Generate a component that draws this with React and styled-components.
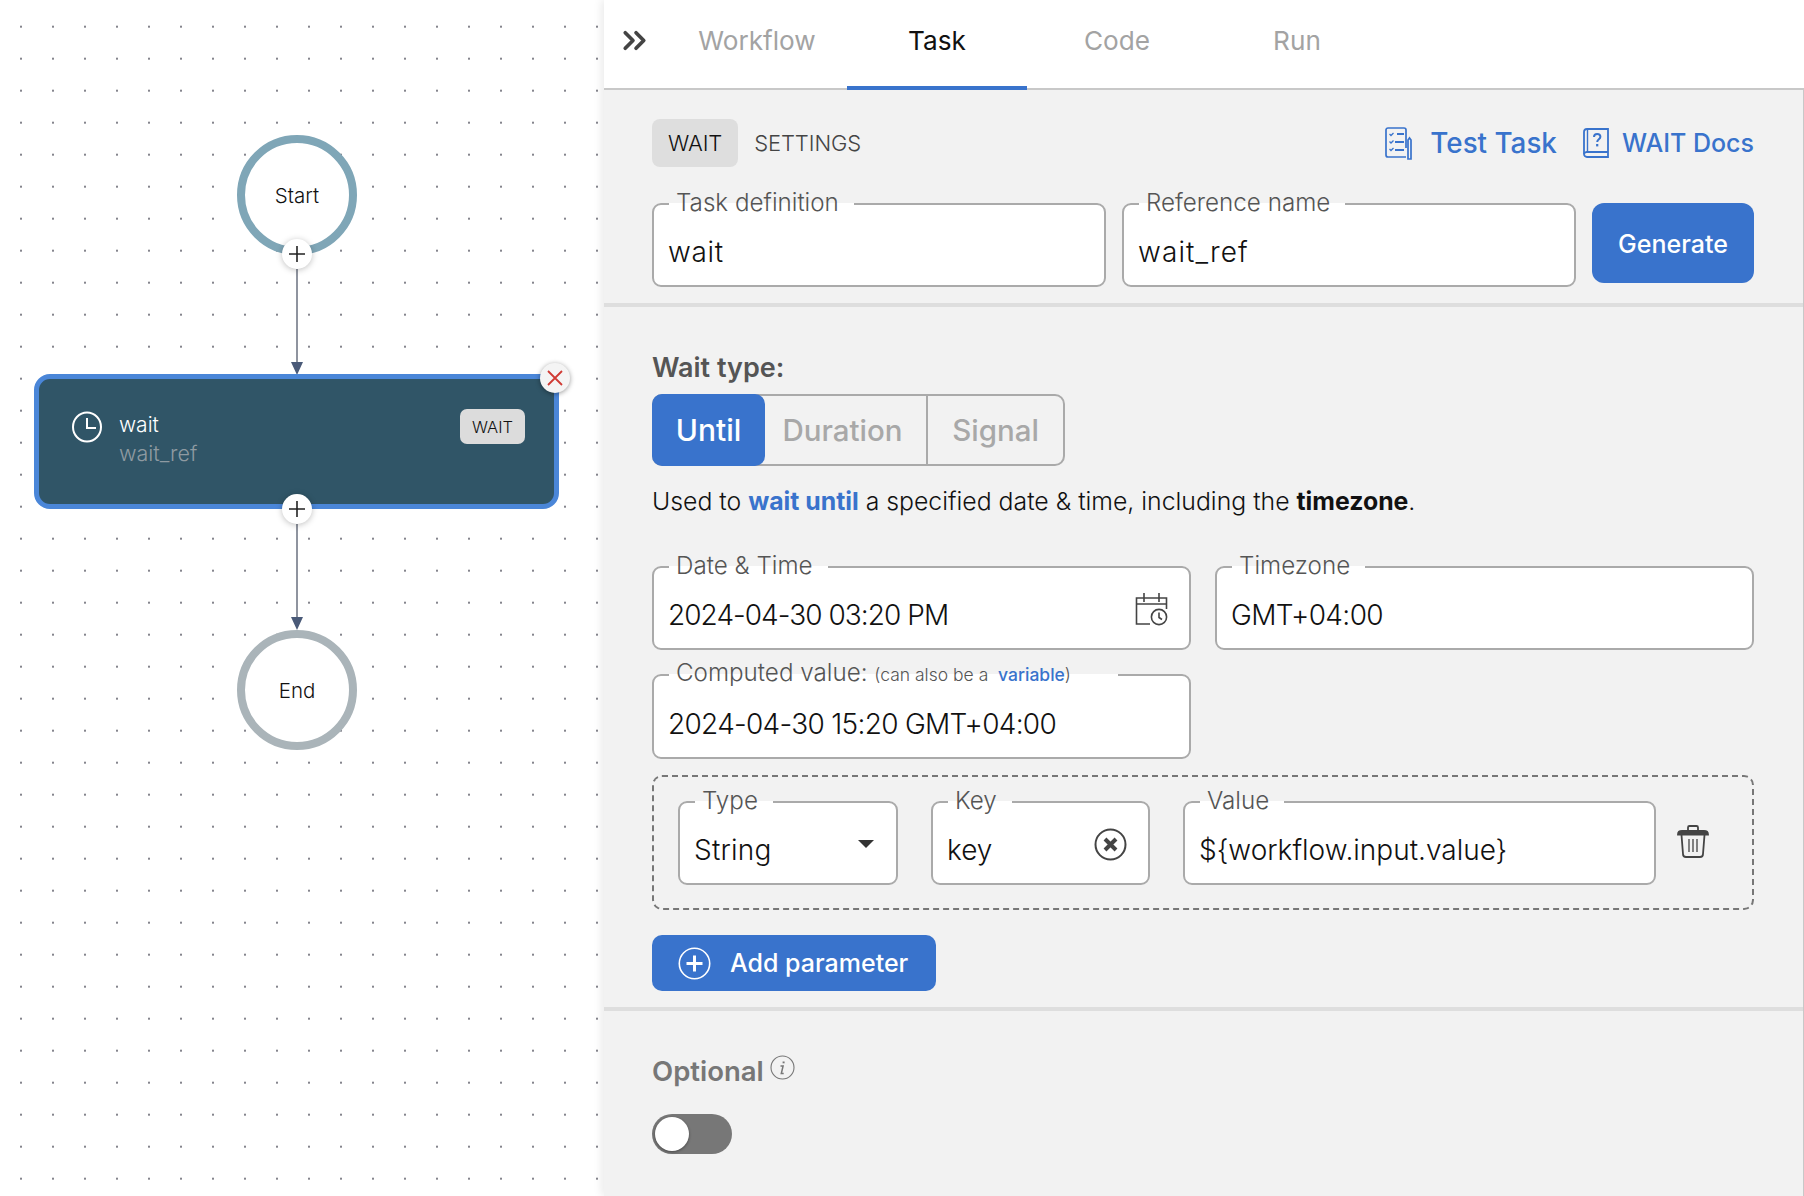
import styled, { createGlobalStyle } from "styled-components";
import { ChevronsRight } from "lucide-react";

const BLUE = "#3973cc";

const GlobalStyle = createGlobalStyle`
  html, body {
    margin: 0;
    padding: 0;
    background: #fff;
    font-family: Inter, "Liberation Sans", sans-serif;
  }
  * {
    box-sizing: border-box;
  }
`;

function Plus() {
  return (
    <svg width="18" height="18" viewBox="0 0 18 18">
      <path d="M9 1v16M1 9h16" stroke="#222" strokeWidth="1.6" fill="none" />
    </svg>
  );
}

function ClockIcon() {
  return (
    <svg width="30" height="34" viewBox="0 0 30 34" fill="none" stroke="#fff" strokeWidth="2">
      <ellipse cx="15" cy="16" rx="14" ry="14.5" />
      <path d="M15 7v10h9" />
    </svg>
  );
}

function TestTaskIcon() {
  return (
    <svg width="28" height="33" viewBox="0 0 28 33" fill="none" stroke={BLUE} strokeWidth="1.7">
      <path d="M21 21V3a2 2 0 0 0-2-2H3a2 2 0 0 0-2 2v25a2 2 0 0 0 2 2h18" />
      <path d="M4.5 7l1.5 1.5L8.500 6M4.500 14.500L6 16l2.500-2.500M4.500 22L6 23.500 8.500 21" strokeWidth="1.3" />
      <path d="M12 7h7M10 15h9M10 23h9" strokeWidth="2" />
      <path d="M23 13l1.500-2 1.500 2v19h-3z" />
    </svg>
  );
}

function DocsIcon() {
  return (
    <svg width="26" height="30" viewBox="0 0 26 30" fill="none" stroke={BLUE} strokeWidth="1.8">
      <path d="M25 24V1H4a3 3 0 0 0-3 3v22" />
      <path d="M1 26a3 3 0 0 1 3-2h21M25 24v5H4a3 3 0 0 1-3-3" />
      <path d="M4.500 1v23" strokeWidth="1.400" />
      <path d="M11 9c0-2 1.500-3 3.200-3s3.200 1 3.200 2.800c0 2.400-3.200 2.600-3.200 5.200" strokeWidth="2" />
      <path d="M14.200 16v2.400" strokeWidth="2.200" />
    </svg>
  );
}

function CalendarClockIcon() {
  return (
    <svg width="33" height="34" viewBox="0 0 33 34" fill="none" stroke="#444" strokeWidth="1.600">
      <path d="M15 32H1.500V6h30v11" />
      <path d="M1.500 12h30M9 1v9M24 1v9" />
      <circle cx="24" cy="25" r="7.600" fill="#fff" />
      <path d="M24 20.500V25.500l3 2" />
    </svg>
  );
}

function ClearIcon() {
  return (
    <svg width="33" height="33" viewBox="0 0 33 33" fill="none" stroke="#444">
      <circle cx="16.500" cy="16.500" r="15" strokeWidth="2" />
      <path d="M11 11l11 11M22 11L11 22" strokeWidth="4" />
    </svg>
  );
}

function TrashIcon() {
  return (
    <svg width="32" height="33" viewBox="0 0 32 33" fill="none" stroke="#444" strokeWidth="1.800">
      <path d="M1 9.500c0-2 1-3.500 4-3.500h22c3 0 4 1.500 4 3.500z" fill="#444" />
      <path d="M11 5V2.500A1.500 1.500 0 0 1 12.500 1h7A1.500 1.500 0 0 1 21 2.500V5" />
      <path d="M4.500 10l1.500 19a3 3 0 0 0 3 3h14a3 3 0 0 0 3-3l1.500-19" />
      <path d="M12 14v13M16 14v13M20 14v13" strokeWidth="1.300" />
    </svg>
  );
}

function AddIcon() {
  return (
    <svg width="33" height="33" viewBox="0 0 33 33" fill="none" stroke="#fff">
      <circle cx="16.500" cy="16.500" r="15.200" strokeWidth="1.600" />
      <path d="M16.500 8.500v16M8.500 16.500h16" strokeWidth="3" />
    </svg>
  );
}

function InfoIcon() {
  return (
    <svg width="25" height="25" viewBox="0 0 25 25" fill="none" stroke="#777">
      <circle cx="12.500" cy="12.500" r="11.500" strokeWidth="1.100" />
      <path d="M10.500 11h2.600l-1.800 7.500h2.400" strokeWidth="1.500" />
      <path d="M13.600 6.500v1.800" strokeWidth="2" />
    </svg>
  );
}

function Field({ label, spacing = 0, tall, children }) {
  return (
    <FieldBox $tall={tall}>
      <FieldLegend>{label}</FieldLegend>
      <FieldValue $spacing={spacing}>{children}</FieldValue>
    </FieldBox>
  );
}

export default function App() {
  return (
    <Page>
      <GlobalStyle />
      <Canvas>
        <Edges width="604" height="1196">
          <path d="M297 269v96M297 524v94" stroke="#6b7280" strokeWidth="1.500" fill="none" />
          <path d="M291 362h12l-6 13zM291 617h12l-6 13z" fill="#4a5a78" />
        </Edges>
        <TerminalNode $top={135} $color="#7fa6b7">Start</TerminalNode>
        <AddButton $top={239}>
          <Plus />
        </AddButton>
        <TaskNode>
          <ClockIcon />
          <NodeText>
            <NodeName>wait</NodeName>
            <NodeRef>wait_ref</NodeRef>
          </NodeText>
          <NodeBadge>WAIT</NodeBadge>
          <RemoveButton>
            <svg width="16" height="16" viewBox="0 0 16 16">
              <path d="M1 1l14 14M15 1L1 15" stroke="#d03a34" strokeWidth="1.800" fill="none" />
            </svg>
          </RemoveButton>
        </TaskNode>
        <AddButton $top={494}>
          <Plus />
        </AddButton>
        <TerminalNode $top={630} $color="#aab4b9">End</TerminalNode>
      </Canvas>

      <Panel>
        <TabBar>
          <CollapseButton>
            <ChevronsRight size={37} strokeWidth={2.4} color="#444" />
          </CollapseButton>
          <Tab>Workflow</Tab>
          <Tab $active>Task</Tab>
          <Tab>Code</Tab>
          <Tab>Run</Tab>
        </TabBar>

        <TopSection>
          <SubHeader>
            <SubTabs>
              <SubTab $active>WAIT</SubTab>
              <SubTab>SETTINGS</SubTab>
            </SubTabs>
            <HeaderLinks>
              <TestLink>
                <TestTaskIcon />
                Test Task
              </TestLink>
              <DocsLink>
                <DocsIcon />
                WAIT Docs
              </DocsLink>
            </HeaderLinks>
          </SubHeader>
          <NameRow>
            <Field label="Task definition" spacing={0.7}>wait</Field>
            <Field label="Reference name" spacing={1.1}>wait_ref</Field>
            <GenerateButton>Generate</GenerateButton>
          </NameRow>
        </TopSection>

        <WaitSection>
          <Heading>Wait type:</Heading>
          <Segments>
            <UntilSegment>Until</UntilSegment>
            <DurationSegment>Duration</DurationSegment>
            <SignalSegment>Signal</SignalSegment>
          </Segments>
          <Description>
            Used to <BlueStrong>wait until</BlueStrong> a specified date &amp; time, including the{" "}
            <strong>timezone</strong>.
          </Description>
          <DateRow>
            <Field label="Date & Time" spacing={-0.95}>
              2024-04-30 03:20 PM
              <FieldIcon>
                <CalendarClockIcon />
              </FieldIcon>
            </Field>
            <Field label="Timezone" spacing={-0.6}>GMT+04:00</Field>
          </DateRow>
          <ComputedRow>
            <Field
              tall
              label={
                <>
                  Computed value: <SmallNote>(can also be a&nbsp; <VariableLink>variable</VariableLink>)</SmallNote>
                </>
              }
              spacing={-0.7}
            >
              2024-04-30 15:20 GMT+04:00
            </Field>
          </ComputedRow>
          <ParamBox>
            <TypeSlot>
              <Field label="Type" spacing={0.2}>
                String
                <FieldIcon>
                  <Caret />
                </FieldIcon>
              </Field>
            </TypeSlot>
            <KeySlot>
              <Field label="Key">
                key
                <FieldIcon>
                  <ClearIcon />
                </FieldIcon>
              </Field>
            </KeySlot>
            <ValueSlot>
              <Field label="Value">{"${workflow.input.value}"}</Field>
            </ValueSlot>
            <TrashButton>
              <TrashIcon />
            </TrashButton>
          </ParamBox>
          <AddParamButton>
            <AddIcon />
            Add parameter
          </AddParamButton>
        </WaitSection>

        <OptionalSection>
          <OptionalHeading>
            Optional
            <InfoIcon />
          </OptionalHeading>
          <Switch>
            <SwitchKnob />
          </Switch>
        </OptionalSection>
      </Panel>
    </Page>
  );
}

const Page = styled.div`
  display: flex;
  width: 1804px;
  height: 1196px;
  overflow: hidden;
`;

const Canvas = styled.div`
  position: relative;
  width: 604px;
  flex: none;
  background-color: #fff;
  background-image: radial-gradient(circle at center, #85858d 1.1px, transparent 1.5px);
  background-size: 32px 32px;
  background-position: 5px 10.700px;
`;

const Edges = styled.svg`
  position: absolute;
  left: 0;
  top: 0;
`;

const TerminalNode = styled.div`
  position: absolute;
  left: 237px;
  top: ${({ $top }) => $top}px;
  width: 120px;
  height: 120px;
  display: flex;
  align-items: center;
  justify-content: center;
  border: 8px solid ${({ $color }) => $color};
  border-radius: 50%;
  background: #fff;
  font-size: 20.500px;
  font-weight: 300;
  color: #111;
`;

const AddButton = styled.div`
  position: absolute;
  left: 282px;
  top: ${({ $top }) => $top}px;
  width: 30px;
  height: 30px;
  display: flex;
  align-items: center;
  justify-content: center;
  border-radius: 50%;
  background: #fff;
  box-shadow: 0 1px 6px rgba(0, 0, 0, 0.25);
  z-index: 2;
`;

const TaskNode = styled.div`
  position: absolute;
  left: 34px;
  top: 374px;
  width: 525px;
  height: 135px;
  display: flex;
  align-items: flex-start;
  padding: 32px 29px 0 33px;
  border: 5px solid #4a86d8;
  border-radius: 16px;
  background: #305567;
`;

const NodeText = styled.div`
  margin-left: 17px;
  flex: 1;
`;

const NodeName = styled.div`
  margin-top: 1px;
  font-size: 21px;
  font-weight: 300;
  line-height: 26px;
  color: #fff;
`;

const NodeRef = styled.div`
  margin-top: 2px;
  font-size: 21.500px;
  font-weight: 300;
  line-height: 26px;
  color: #8e9aa1;
`;

const NodeBadge = styled.div`
  margin-top: -2px;
  width: 65px;
  height: 35px;
  display: flex;
  align-items: center;
  justify-content: center;
  border-radius: 7px;
  background: #dcdcdc;
  font-size: 16.500px;
  font-weight: 300;
  color: #111;
`;

const RemoveButton = styled.div`
  position: absolute;
  right: -16px;
  top: -16px;
  width: 30px;
  height: 30px;
  display: flex;
  align-items: center;
  justify-content: center;
  border-radius: 50%;
  background: #f4f4f4;
  box-shadow: 0 1px 5px rgba(0, 0, 0, 0.4);
`;

const Panel = styled.div`
  flex: 1;
  display: flex;
  flex-direction: column;
  background: #f2f2f2;
  border-right: 1px solid #c8c8c8;
  box-shadow: -3px 0 8px rgba(0, 0, 0, 0.08);
  z-index: 3;
`;

const TabBar = styled.div`
  height: 90px;
  flex: none;
  display: flex;
  background: #fff;
  border-bottom: 2px solid #c8c8c8;
  margin-right: -1px;
`;

const CollapseButton = styled.div`
  width: 63px;
  display: flex;
  align-items: center;
  justify-content: center;
  padding: 0 3px 8px 0;
`;

const Tab = styled.div`
  width: 180px;
  display: flex;
  align-items: center;
  justify-content: center;
  padding-bottom: 6px;
  font-size: 26.200px;
  font-weight: 400;
  color: ${({ $active }) => ($active ? "#111" : "#a3a3a3")};
  border-bottom: 4px solid ${({ $active }) => ($active ? BLUE : "transparent")};
  margin-bottom: -2px;
`;

const TopSection = styled.section`
  flex: none;
  height: 217px;
  padding: 29px 49px 0 48px;
  border-bottom: 4px solid #dedede;
`;

const SubHeader = styled.div`
  display: flex;
  align-items: center;
  justify-content: space-between;
`;

const SubTabs = styled.div`
  display: flex;
  gap: 16px;
`;

const SubTab = styled.div`
  height: 48px;
  display: flex;
  align-items: center;
  padding: 0 ${({ $active }) => ($active ? "16px" : "0")};
  border-radius: 8px;
  background: ${({ $active }) => ($active ? "#dedede" : "transparent")};
  font-size: 22px;
  font-weight: 300;
  letter-spacing: -0.1px;
  color: ${({ $active }) => ($active ? "#111" : "#444")};
`;

const HeaderLinks = styled.div`
  display: flex;
  align-items: center;
  gap: 26px;
`;

const TestLink = styled.div`
  display: flex;
  align-items: center;
  gap: 17px;
  font-size: 27.800px;
  font-weight: 500;
  color: ${BLUE};
`;

const DocsLink = styled.div`
  display: flex;
  align-items: center;
  gap: 13px;
  font-size: 25px;
  font-weight: 500;
  color: ${BLUE};
`;

const NameRow = styled.div`
  margin-top: 23px;
  display: grid;
  grid-template-columns: 1fr 1fr 162px;
  gap: 16px;
  align-items: start;
`;

const FieldBox = styled.fieldset`
  margin: 0;
  min-width: 0;
  width: 100%;
  height: ${({ $tall }) => ($tall ? "99px" : "97px")};
  padding: 0 15px;
  border: 2px solid #aaa;
  border-radius: 9px;
  background: #fff;
`;

const FieldLegend = styled.legend`
  padding: 0 15px 2px 7px;
  font-size: 24.200px;
  font-weight: 300;
  line-height: 26px;
  color: #555;
  white-space: nowrap;
`;

const FieldValue = styled.div`
  display: flex;
  align-items: center;
  justify-content: space-between;
  margin-top: 14px;
  margin-left: -1px;
  height: 40px;
  font-size: 28px;
  font-weight: 300;
  letter-spacing: ${({ $spacing }) => $spacing}px;
  color: #111;
  white-space: nowrap;
`;

const FieldIcon = styled.span`
  display: flex;
  margin-top: -12px;
  margin-right: 6px;
`;

const Caret = styled.span`
  width: 0;
  height: 0;
  margin-right: 1px;
  border-left: 8px solid transparent;
  border-right: 8px solid transparent;
  border-top: 8px solid #333;
`;

const GenerateButton = styled.div`
  margin-top: 13px;
  height: 80px;
  display: flex;
  align-items: center;
  justify-content: center;
  padding-top: 1px;
  border-radius: 12px;
  background: ${BLUE};
  font-size: 25px;
  font-weight: 500;
  color: #fff;
`;

const WaitSection = styled.section`
  flex: none;
  height: 704px;
  padding: 45px 49px 0 48px;
  border-bottom: 4px solid #dedede;
`;

const Heading = styled.div`
  font-size: 27px;
  font-weight: 600;
  line-height: 32px;
  color: #555;
`;

const Segments = styled.div`
  margin-top: 10px;
  width: 413px;
  height: 72px;
  display: flex;
  border: 2px solid #aaa;
  border-radius: 10px;
`;

const UntilSegment = styled.div`
  width: 113px;
  margin: -2px 0 -2px -2px;
  display: flex;
  align-items: center;
  justify-content: center;
  border-radius: 10px;
  background: ${BLUE};
  font-size: 30px;
  font-weight: 500;
  color: #fff;
`;

const DurationSegment = styled.div`
  width: 163px;
  display: flex;
  align-items: center;
  justify-content: center;
  padding-right: 6px;
  border-right: 2px solid #aaa;
  font-size: 29.500px;
  font-weight: 500;
  color: #a8a8a8;
`;

const SignalSegment = styled(DurationSegment)`
  flex: 1;
  padding-right: 0;
  border-right: none;
`;

const Description = styled.p`
  margin: 19px 0 0;
  font-size: 24.800px;
  font-weight: 300;
  line-height: 32px;
  color: #111;

  strong {
    font-weight: 700;
  }
`;

const BlueStrong = styled.strong`
  color: ${BLUE};
`;

const DateRow = styled.div`
  margin-top: 36px;
  display: grid;
  grid-template-columns: 539px 539px;
  gap: 24px;
`;

const ComputedRow = styled.div`
  margin-top: 10px;
  width: 539px;
`;

const SmallNote = styled.span`
  margin-right: 32px;
  font-size: 17.500px;
`;

const VariableLink = styled.span`
  font-weight: 500;
  color: ${BLUE};
`;

const ParamBox = styled.div`
  margin-top: 16px;
  height: 135px;
  display: flex;
  padding: 11px 0 0 24px;
  border: 2px dashed #777;
  border-radius: 10px;
`;

const TypeSlot = styled.div`
  width: 220px;
`;

const KeySlot = styled.div`
  width: 219px;
  margin-left: 33px;
`;

const ValueSlot = styled.div`
  width: 473px;
  margin-left: 33px;
`;

const TrashButton = styled.div`
  margin: 37px 0 0 21px;
`;

const AddParamButton = styled.div`
  margin-top: 25px;
  width: 284px;
  height: 56px;
  display: flex;
  align-items: center;
  gap: 19px;
  padding-left: 26px;
  border-radius: 10px;
  background: ${BLUE};
  font-size: 25px;
  font-weight: 500;
  color: #fff;
`;

const OptionalSection = styled.section`
  flex: 1;
  padding: 44px 49px 0 48px;
`;

const OptionalHeading = styled.div`
  display: flex;
  align-items: flex-start;
  gap: 6px;
  font-size: 27.500px;
  font-weight: 600;
  line-height: 32px;
  color: #777;
`;

const Switch = styled.div`
  margin-top: 27px;
  width: 80px;
  height: 40px;
  display: flex;
  align-items: center;
  padding-left: 3px;
  border-radius: 20px;
  background: #777;
`;

const SwitchKnob = styled.div`
  width: 34px;
  height: 34px;
  border-radius: 50%;
  background: #fff;
  box-shadow: 0 1px 3px rgba(0, 0, 0, 0.4);
`;
